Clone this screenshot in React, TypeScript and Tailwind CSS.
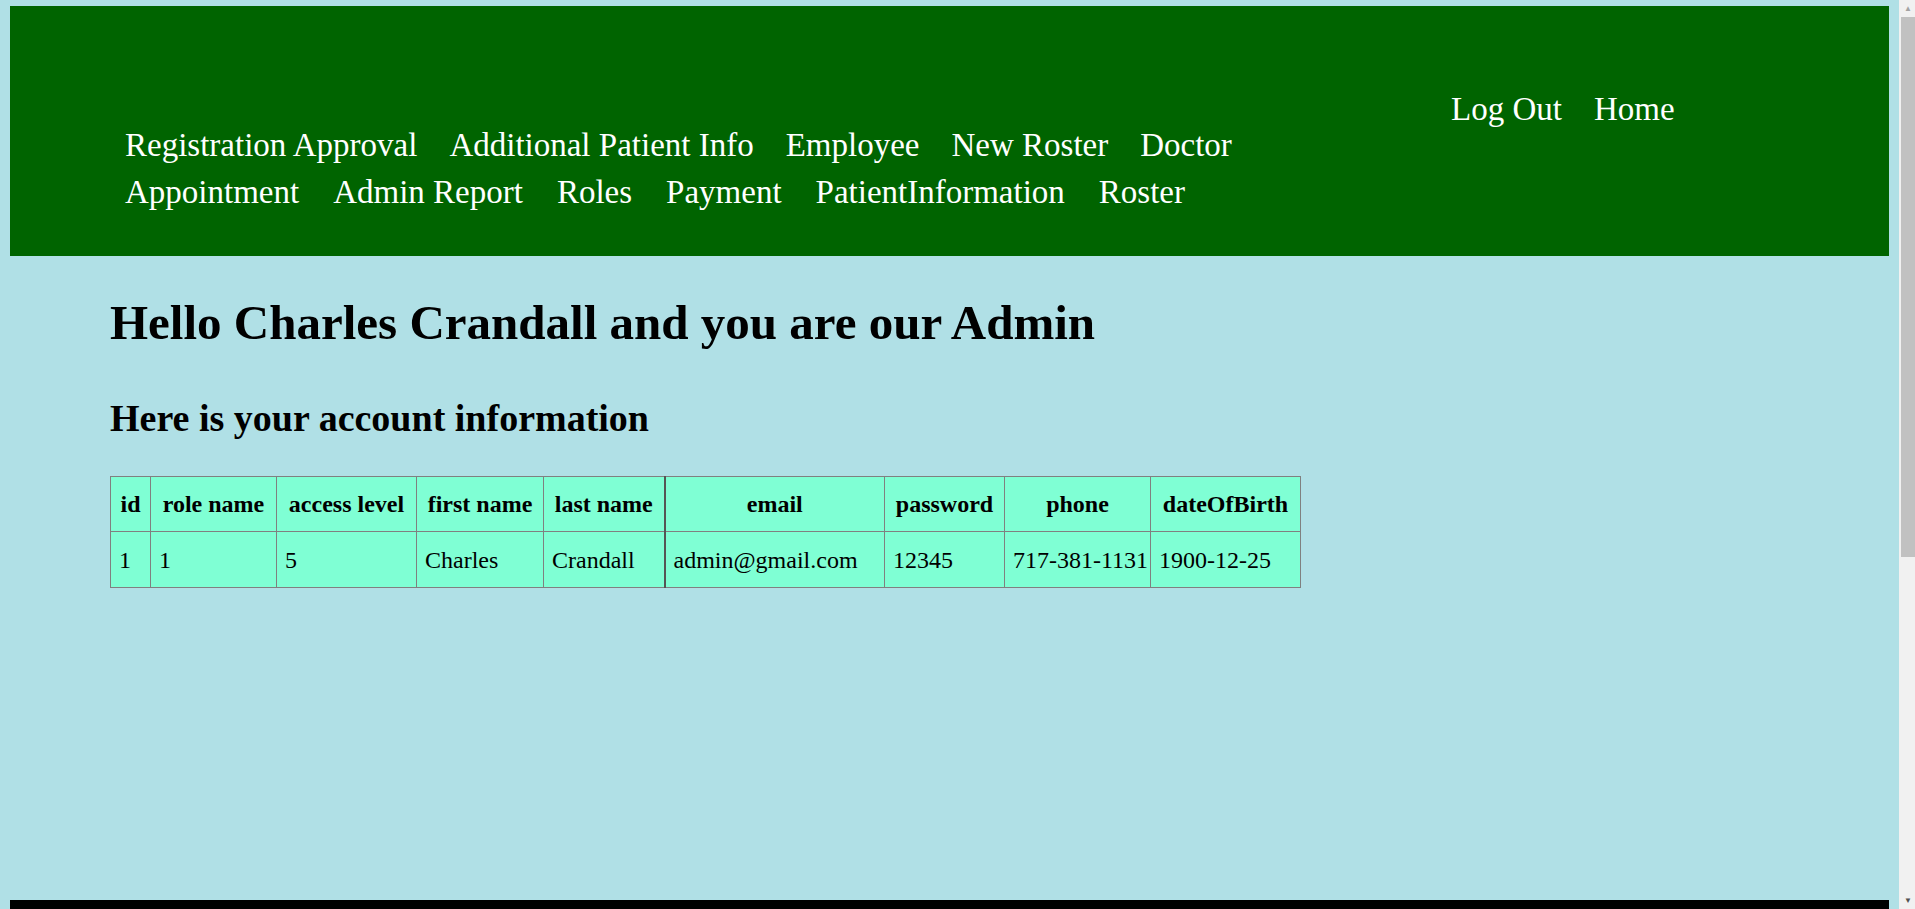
const topLinks = ['Registration Approval', 'Additional Patient Info', 'Employee', 'New Roster', 'Doctor'];
const bottomLinks = ['Appointment', 'Admin Report', 'Roles', 'Payment', 'PatientInformation', 'Roster'];

const columns = [
	{ label: 'id', width: 'w-[40px]' },
	{ label: 'role name', width: 'w-[126px]' },
	{ label: 'access level', width: 'w-[140px]' },
	{ label: 'first name', width: 'w-[127px]' },
	{ label: 'last name', width: 'w-[121px]' },
	{ label: 'email', width: 'w-[220px]' },
	{ label: 'password', width: 'w-[120px]' },
	{ label: 'phone', width: 'w-[146px]' },
	{ label: 'dateOfBirth', width: 'w-[150px]' },
];

const account = ['1', '1', '5', 'Charles', 'Crandall', 'admin@gmail.com', '12345', '717-381-1131', '1900-12-25'];

// the browser's scrollbar, drawn since the page is taller than the window
const Scrollbar = () => (
	<div className="flex w-[16px] shrink-0 flex-col bg-[#f1f1f1] pl-[2px]">
		<div className="flex h-[17px] items-center justify-center text-[8px] leading-none text-[#a3a3a3]">▲</div>
		<div className="h-[540px] bg-[#c1c1c1]" />
		<div className="flex-1" />
		<div className="flex h-[17px] items-center justify-center text-[8px] leading-none text-[#505050]">▼</div>
	</div>
);

export default function App() {
	return (
		<div
			className="flex h-screen overflow-hidden bg-[#b0e0e6] text-black"
			style={{ fontFamily: '"Liberation Serif", "Times New Roman", serif' }}>
			<div className="flex-1 overflow-hidden">
				<header className="mx-[10px] mt-[6px] flex h-[250px] bg-[#006400] text-[33px] text-white">
					<nav className="w-[1150px] shrink-0 pl-[115px] pt-[116px] leading-[47px]">
						<div className="flex gap-x-[32px]">
							{topLinks.map((link) => (
								<a key={link} href="#" className="whitespace-nowrap">
									{link}
								</a>
							))}
						</div>
						<div className="flex gap-x-[34px]">
							{bottomLinks.map((link) => (
								<a key={link} href="#" className="whitespace-nowrap">
									{link}
								</a>
							))}
						</div>
					</nav>
					<nav className="flex gap-x-[32px] pl-[291px] pt-[80px] leading-[47px]">
						<a href="#">Log Out</a>
						<a href="#">Home</a>
					</nav>
				</header>

				<main className="h-[644px] px-[110px] pt-[36px]">
					<h1 className="text-[49px] font-bold leading-[61px]">Hello Charles Crandall and you are our Admin</h1>
					<h2 className="mt-[43px] text-[38px] font-bold leading-[45px]">Here is your account information</h2>
					<table className="mt-[35px] w-[1190px] table-fixed border-collapse bg-[#7fffd4]">
						<thead>
							<tr className="h-[55px] text-[24px]">
								{columns.map((col) => (
									<th
										key={col.label}
										className={`${col.width} border border-[#808080] px-[8px] font-bold whitespace-nowrap ${col.label === 'email' ? 'border-l-2 border-l-[#555555]' : ''}`}>
										{col.label}
									</th>
								))}
							</tr>
						</thead>
						<tbody>
							<tr className="h-[56px] text-[24px]">
								{account.map((value, index) => (
									<td
										key={index}
										className={`border border-[#808080] px-[8px] text-left whitespace-nowrap ${index === 5 ? 'border-l-2 border-l-[#555555]' : ''}`}>
										{value}
									</td>
								))}
							</tr>
						</tbody>
					</table>
				</main>

				<footer className="mx-[10px] h-[560px] bg-black" />
			</div>
			<Scrollbar />
		</div>
	);
}
